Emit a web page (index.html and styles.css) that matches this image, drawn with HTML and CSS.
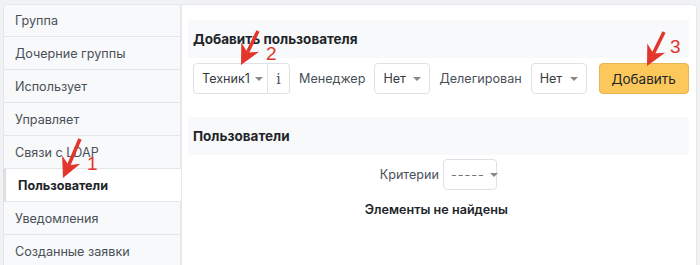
FILE: index.html
```html
<!DOCTYPE html>
<html lang="ru">
<head>
    <meta charset="UTF-8">
    <title>Пользователи группы</title>
    <link rel="stylesheet" href="styles.css">
</head>
<body>

    <div class="page">
        <!-- Меню слева -->
        <ul class="side-menu">
            <li class="side-item">Группа</li>
            <li class="side-item">Дочерние группы</li>
            <li class="side-item">Использует</li>
            <li class="side-item">Управляет</li>
            <li class="side-item">Связи с LDAP</li>
            <li class="side-item active">Пользователи</li>
            <li class="side-item">Уведомления</li>
            <li class="side-item">Созданные заявки</li>
        </ul>

        <div class="panel">
            <div class="block-title">Добавить пользователя</div>
            <div class="add-row">
                <div class="input-group">
                    <span class="select select-user">Техник1 <span class="caret"></span></span>
                    <span class="addon">i</span>
                </div>
                <span class="label">Менеджер</span>
                <span class="select select-small">Нет <span class="caret"></span></span>
                <span class="label">Делегирован</span>
                <span class="select select-small">Нет <span class="caret"></span></span>
                <button class="btn-add">Добавить</button>
            </div>

            <div class="block-title second">Пользователи</div>
            <div class="filter-row">
                <span class="label">Критерии</span>
                <span class="select select-crit">----- <span class="caret"></span></span>
            </div>
            <p class="empty">Элементы не найдены</p>
        </div>
    </div>

    <!-- Стрелки-подсказки поверх страницы -->
    <svg class="marks" width="700" height="265" viewBox="0 0 700 265">
        <line x1="80" y1="139" x2="68.7" y2="165.2" class="arrow"/>
        <polygon points="63,178 80.3,163.8 68.7,165.2 62.1,155.6" class="head"/>
        <text x="87" y="170" class="num">1</text>

        <line x1="258" y1="31" x2="247.4" y2="52.6" class="arrow"/>
        <polygon points="241,65 259.1,51.8 247.4,52.6 241.3,42.6" class="head"/>
        <text x="266" y="60" class="num">2</text>

        <line x1="664" y1="32" x2="653.4" y2="53.6" class="arrow"/>
        <polygon points="647,66 665.1,52.8 653.4,53.6 647.3,43.6" class="head"/>
        <text x="670" y="53" class="num">3</text>
    </svg>

</body>
</html>
```

FILE: styles.css
```css
/* Общие стили */
body {
    margin: 0;
    background-color: #f1f2f4;
    font-family: 'Inter', 'Noto Sans', sans-serif;
    font-size: 12.6px;
    color: #212529;
}

.page {
    display: flex;
    align-items: stretch;
    padding: 4px 5px 0 3px;
    height: 261px;
    overflow: hidden;
}

/* Меню слева */
.side-menu {
    list-style: none;
    margin: 0;
    padding: 0;
    width: 178px;
    flex-shrink: 0;
}

.side-item {
    box-sizing: border-box;
    height: 33px;
    display: flex;
    align-items: center;
    padding-left: 11px;
    background-color: #f8f9fa;
    border: 1px solid #e4e6e9;
    border-top: none;
    color: #495057;
}

.side-item:first-child {
    border-top: 1px solid #e4e6e9;
    border-top-left-radius: 3px;
}

.side-item.active {
    background-color: #ffffff;
    border-left: 3px solid #dcdee2;
    border-right: none;
    width: 180px;
    padding-left: 12px;
    font-weight: bold;
    color: #212529;
}

/* Основная панель */
.panel {
    flex: 1;
    background-color: #ffffff;
    border: 1px solid #e6e8eb;
    border-bottom: none;
    border-radius: 0 4px 0 0;
    padding: 15px 7px 0 6px;
}

.block-title {
    background-color: #f8f9fa;
    height: 38px;
    display: flex;
    align-items: center;
    padding-left: 5px;
    font-size: 13.5px;
    font-weight: bold;
    color: #212529;
}

.block-title.second {
    margin-top: 23px;
}

.add-row {
    display: flex;
    align-items: center;
    gap: 9px;
    margin-top: 5px;
    padding-left: 5px;
}

.label {
    color: #495057;
    white-space: nowrap;
}

.select {
    box-sizing: border-box;
    height: 31px;
    display: inline-flex;
    align-items: center;
    justify-content: space-between;
    padding: 0 8px;
    border: 1px solid #dee2e6;
    border-radius: 4px;
    background-color: #ffffff;
    color: #343a40;
    white-space: nowrap;
}

.caret {
    width: 0;
    height: 0;
    border-left: 4px solid transparent;
    border-right: 4px solid transparent;
    border-top: 4px solid #888888;
    margin-left: 5px;
}

.input-group {
    display: flex;
}

.select-user {
    width: 75px;
    border-radius: 4px 0 0 4px;
}

.addon {
    box-sizing: border-box;
    width: 22px;
    height: 31px;
    display: flex;
    align-items: center;
    justify-content: center;
    border: 1px solid #dee2e6;
    border-left: none;
    border-radius: 0 4px 4px 0;
    font-family: 'DejaVu Serif', serif;
    font-size: 14px;
    color: #495057;
}

.select-small {
    width: 56px;
}

.btn-add {
    box-sizing: border-box;
    height: 31px;
    width: 90px;
    margin-left: 3px;
    background-color: #fcc85c;
    border: 1px solid #e9b44f;
    border-radius: 4px;
    font-family: inherit;
    font-size: 13.5px;
    color: #212529;
    cursor: pointer;
}

.filter-row {
    display: flex;
    justify-content: center;
    align-items: center;
    gap: 4px;
    margin-top: 4px;
}

.select-crit {
    width: 54px;
    padding: 0 6px 0 7px;
    color: #6c757d;
    letter-spacing: 1px;
}

.empty {
    text-align: center;
    font-size: 12.6px;
    font-weight: 600;
    margin: 12px 4px 0 0;
}

/* Стрелки */
.marks {
    position: absolute;
    left: 0;
    top: 0;
    pointer-events: none;
}

.arrow {
    stroke: #e2352b;
    stroke-width: 3.5;
}

.head {
    fill: #e2352b;
}

.num {
    fill: #e2352b;
    font-family: 'Liberation Sans', sans-serif;
    font-size: 19px;
}
```
